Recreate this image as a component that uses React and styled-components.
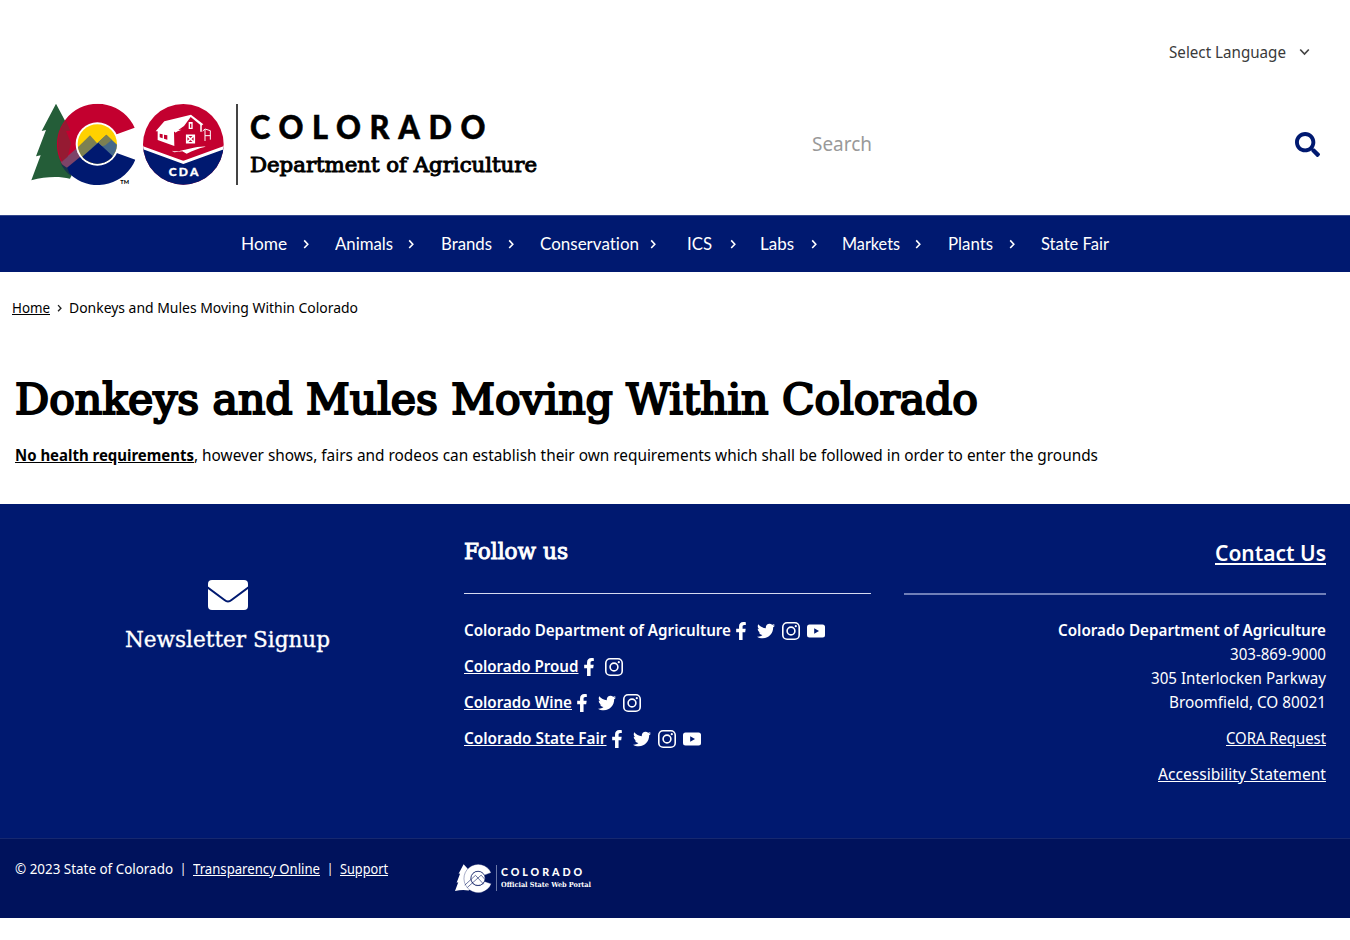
import React, { useLayoutEffect, useRef, useState } from "react";
import styled, { createGlobalStyle } from "styled-components";
import { FaSearch, FaFacebookF, FaTwitter } from "react-icons/fa";

const navy = "#001970";
const sans = '"Noto Sans", "Open Sans", sans-serif';
const slab = '"DejaVu Serif Condensed", "DejaVu Serif", serif';

const GlobalStyle = createGlobalStyle`
  * { box-sizing: border-box; }
  body { margin: 0; background: #fff; color: #000; font-family: ${sans}; font-size: 16px; line-height: 24px; font-variant-ligatures: none; }
  a { color: inherit; }
  svg { display: block; flex: none; }
`;

/* Condenses a single line of text to a fixed measure. */
const FitBox = styled.span`
  display: inline-block;
  flex: none;
  white-space: nowrap;
  text-align: left;
  width: ${(p) => p.$w}px;
  vertical-align: top;
  text-decoration: inherit;
`;
const FitInner = styled.span`
  display: inline-block;
  transform-origin: 0 50%;
  text-decoration: inherit;
`;
function Fit({ w, children }) {
  const ref = useRef(null);
  const [scale, setScale] = useState(1);
  useLayoutEffect(() => {
    setScale(w / ref.current.getBoundingClientRect().width);
  }, [w]);
  return (
    <FitBox $w={w}>
      <FitInner ref={ref} style={{ transform: `scaleX(${scale})` }}>{children}</FitInner>
    </FitBox>
  );
}

const Header = styled.header`
  height: 215px;
  padding-top: 40px;
`;
const LanguageBar = styled.div`
  display: flex;
  justify-content: flex-end;
  align-items: center;
  gap: 13px;
  height: 24px;
  padding-right: 40px;
  color: #3a3a3a;
`;
const Masthead = styled.div`
  display: flex;
  align-items: center;
  height: 84px;
  margin-top: 38px;
  padding: 0 30px;
`;
const Brand = styled.a`
  display: flex;
  align-items: center;
  width: 782px;
  text-decoration: none;
`;
const Divider = styled.span`
  width: 2px;
  height: 81px;
  margin: 0 12px 0 10px;
  background: #444;
`;
const Wordmark = styled.div`
  display: flex;
  flex-direction: column;
  padding-top: 3px;
`;
const StateName = styled.span`
  height: 40px;
  font: 900 32px/40px Lato, sans-serif;
  letter-spacing: 9px;
  -webkit-text-stroke: 0.5px;
`;
const DeptName = styled.span`
  height: 37px;
  font: 400 21px/37px ${slab};
  -webkit-text-stroke: 0.9px;
`;
const SearchForm = styled.div`
  flex: 1;
  display: flex;
  align-items: center;
  justify-content: space-between;
  font-size: 20px;
  color: #999;
`;

const Nav = styled.nav`
  display: flex;
  height: 57px;
  padding-left: 241px;
  align-items: center;
  border-top: 1px solid #33478c;
  background: ${navy};
  color: #fff;
  font-family: Lato, sans-serif;
  font-size: 16.5px;
`;
const NavItem = styled.a`
  display: flex;
  align-items: center;
  gap: ${(p) => p.$gap}px;
  width: ${(p) => p.$cell}px;
  text-decoration: none;
`;

const Breadcrumb = styled.div`
  display: flex;
  align-items: center;
  height: 24px;
  margin: 23px 0 0 12px;
  font-size: 15px;
`;
const Crumb = styled.span`
  text-decoration: ${(p) => (p.$link ? "underline" : "none")};
`;
const CrumbSep = styled.span`
  display: flex;
  width: 19px;
  padding: 1px 0 0 7px;
`;
const Title = styled.h1`
  margin: 57px 0 0 15px;
  height: 48px;
  font: 400 42px/48px ${slab};
  -webkit-text-stroke: 2px;
`;
const Intro = styled.p`
  display: flex;
  margin: 19px 0 0 15px;
  height: 61px;
`;
const Strong = styled.strong`
  font-weight: 700;
  text-decoration: underline;
`;

const Footer = styled.footer`
  display: grid;
  grid-template-columns: 455px 416px 1fr;
  height: 334px;
  background: ${navy};
  color: #fff;
`;
const Newsletter = styled.div`
  display: flex;
  flex-direction: column;
  align-items: center;
  gap: 15px;
  padding-top: 76px;
  font: 400 22px/30px ${slab};
  -webkit-text-stroke: 0.3px;
`;
const Follow = styled.div`
  padding: 33px 0 0 9px;
`;
const Contact = styled.div`
  padding: 33px 24px 0 33px;
  text-align: right;
`;
const FollowTitle = styled.h2`
  margin: 0;
  height: 56px;
  font: 400 22px/30px ${slab};
  -webkit-text-stroke: 0.9px;
`;
const ContactTitle = styled.h2`
  margin: 0;
  height: 56px;
  font: 600 22px/30px ${sans};
  text-decoration: underline;
`;
const Rule = styled.div`
  height: ${(p) => p.$h}px;
  margin-bottom: ${(p) => 25 - p.$h}px;
  background: ${(p) => p.$c};
`;
const Row = styled.div`
  display: flex;
  align-items: center;
  height: 24px;
  margin-bottom: 12px;
`;
const AccountName = styled.span`
  font-weight: 600;
  text-decoration: ${(p) => (p.$link ? "underline" : "none")};
`;
const Socials = styled.span`
  display: flex;
  align-items: center;
  gap: 7px;
  padding: 2px 0 0 1px;
`;
const Line = styled.div`
  height: 24px;
  margin-bottom: ${(p) => p.$after || 0}px;
  font-weight: ${(p) => (p.$bold ? 600 : 400)};
  text-decoration: ${(p) => (p.$link ? "underline" : "none")};
`;
const BottomBar = styled.div`
  display: flex;
  height: 80px;
  padding: 18px 0 0 15px;
  border-top: 1px solid #16286f;
  background: #00125c;
  color: #fff;
  font-size: 14px;
`;
const Legal = styled.div`
  display: flex;
  width: 440px;
`;
const LegalLink = styled.a`
  text-decoration: underline;
`;
const Pipe = styled.span`
  width: 20px;
  text-align: center;
  font-size: 12px;
`;
const Portal = styled.div`
  display: flex;
  align-items: center;
  height: 30px;
  margin-top: 6px;
`;
const PortalText = styled.div`
  display: flex;
  flex-direction: column;
  margin-left: 4px;
  border-left: 1px solid #6b78a8;
  padding-left: 4px;
`;
const PortalName = styled.span`
  font: 900 11px/14px Lato, sans-serif;
  letter-spacing: 3px;
  height: 14px;
`;
const PortalTag = styled.span`
  font: 700 7px/12px ${slab};
  height: 12px;
`;

const Chevron = ({ color = "#fff", w = 6, h = 10, sw = 1.6 }) => (
  <svg width={w} height={h} viewBox="0 0 6 10" fill="none" stroke={color} strokeWidth={sw}>
    <path d="M1.2 1.4l3.6 3.8-3.6 3.8" />
  </svg>
);

const StateMark = () => (
  <svg width="196" height="84" viewBox="30 36 588 252">
    <defs>
      <clipPath id="ring">
        <path d="M344 113A122 122 0 1 0 346 209L288 188A62 62 0 1 1 286 134Z" />
      </clipPath>
      <clipPath id="disc"><circle cx="232" cy="162" r="59" /></clipPath>
      <clipPath id="badge"><circle cx="490" cy="163" r="121" /></clipPath>
    </defs>
    <path fill="#245d38" d="M108 41L65 123L78 120L48 199L62 196L34 271C75 260 115 258 150 266L190 180L138 123L151 122Z" />
    <g clipPath="url(#ring)">
      <path fill="#c3002f" d="M90 30H360V165H240L140 235L90 300Z" />
      <path fill="#7d4468" d="M120 218L215 136L240 170L150 250Z" />
      <path fill="#001970" d="M140 234L232 158L360 150V300H180L120 262Z" />
    </g>
    <path fill="#8a2033" opacity=".8" d="M137 90L151 122L138 123L153 160L143 200L126 215A122 122 0 0 1 137 90Z" />
    <path fill="#17354b" d="M124 222L142 234L150 255L156 260Q132 246 118 210Z" />
    <circle cx="232" cy="162" r="65" fill="#fff" />
    <g clipPath="url(#disc)">
      <path fill="#ffd100" d="M165 95H300V230H165Z" />
      <path fill="#7c8052" d="M155 190L210 136L245 175L200 220Z" />
      <path fill="#45698a" d="M215 175L259 134L305 178V230H215Z" />
      <path fill="#001970" d="M155 228L235 158L310 228V240H155Z" />
      <path fill="#7c8052" d="M240 153L259 134L275 150L256 166L247 169L235 158Z" />
    </g>
    <text x="301" y="281" textLength="26" lengthAdjust="spacingAndGlyphs" fontFamily="Lato" fontWeight="900" fontSize="18">TM</text>

    <g clipPath="url(#badge)">
      <path fill="#c3002f" d="M360 35H620V290H360Z" />
      <path fill="#001970" d="M360 169L490 221L620 169V290H360Z" />
      <path fill="none" stroke="#fff" strokeWidth="9" d="M360 170L490 217L620 170" />
    </g>
    <path fill="#fff" d="M407 124L433 94L513 74L550 103L544 107L512 81L492 108L474 121L462 126L463 168L413 150V124Z" />
    <path fill="#c3002f" d="M419 131L428 133V145L419 142ZM432 134L442 136V149L432 146Z" />
    <path fill="#fff" d="M506 96H518V117H506ZM463 121L485 119L473 124L466 128Z" />
    <path fill="#c3002f" d="M510 101H514V113H510Z" />
    <path fill="none" stroke="#fff" strokeWidth="4.5" d="M500 136H523V158H500ZM500 136L523 158M523 136L500 158M543 105V125" />
    <path fill="none" stroke="#fff" strokeWidth="3" d="M548 123L555 117L571 122V149M555 119V153M555 137H571" />
    <path fill="#fff" d="M455 182C475 187 482 181 508 176C530 171 545 169 557 170C535 175 519 181 500 191L487 184L463 187Z" />
    <text x="446" y="258" textLength="89" lengthAdjust="spacing" fontFamily="Lato" fontWeight="900" fontSize="36" fill="#fff" stroke="#fff">CDA</text>
  </svg>
);

const SmallMark = () => (
  <svg width="37" height="29" viewBox="34 39 318 248">
    <path fill="#fff" d="M108 41L65 123L78 120L48 199L62 196L34 271C75 260 115 258 150 266L180 250V120Z" />
    <path fill="#fff" stroke="#00125c" strokeWidth="3" d="M344 113A122 122 0 1 0 346 209L288 188A62 62 0 1 1 286 134Z" />
    <circle cx="232" cy="162" r="61" fill="#fff" stroke="#00125c" strokeWidth="6" />
    <path fill="none" stroke="#00125c" strokeWidth="5" d="M118 220L210 136L280 212M140 240L259 134L290 170" />
  </svg>
);

const Envelope = () => (
  <svg width="40" height="30" viewBox="0 0 40 30">
    <rect width="40" height="30" rx="4" fill="#fff" />
    <path d="M-1 7L16.5 20Q20 23 23.5 20L41 7" fill="none" stroke={navy} strokeWidth="2" />
  </svg>
);

const InstagramIcon = () => (
  <svg width="18" height="18" viewBox="0 0 18 18" fill="none" stroke="#fff">
    <rect x=".8" y=".8" width="16.4" height="16.4" rx="4.3" strokeWidth="1.6" />
    <circle cx="9" cy="9" r="3.9" strokeWidth="1.6" />
    <circle cx="13.8" cy="4.2" r="1.1" fill="#fff" stroke="none" />
  </svg>
);
const YoutubeIcon = () => (
  <svg width="18" height="18" viewBox="0 0 18 18">
    <rect y="2.5" width="18" height="13" rx="2.5" fill="#fff" />
    <path d="M7.2 6.2V11.8L12 9Z" fill={navy} />
  </svg>
);
const socialIcons = {
  f: <FaFacebookF size={18} color="#fff" />,
  t: <FaTwitter size={18} color="#fff" />,
  i: <InstagramIcon />,
  y: <YoutubeIcon />,
};

const navItems = [
  ["Home", 46, 16, 94],
  ["Animals", 58, 15, 106],
  ["Brands", 51, 16, 99],
  ["Conservation", 99, 11, 147],
  ["ICS", 25, 18, 73],
  ["Labs", 34, 17, 82],
  ["Markets", 58, 15, 106],
  ["Plants", 45, 16, 93],
  ["State Fair", 68, 0, 68],
];
const accounts = [
  ["Colorado Department of Agriculture", 267, "ftiy", false],
  ["Colorado Proud", 114.5, "fi", true],
  ["Colorado Wine", 108, "fti", true],
  ["Colorado State Fair", 142.5, "ftiy", true],
];

export default function App() {
  return (
    <>
      <GlobalStyle />
      <Header>
        <LanguageBar>
          <Fit w={117}>Select Language</Fit>
          <svg width="11" height="8" viewBox="0 0 11 8" fill="none" stroke="#444" strokeWidth="1.7">
            <path d="M1.2 1.5L5.5 6l4.3-4.5" />
          </svg>
        </LanguageBar>
        <Masthead>
          <Brand>
            <StateMark />
            <Divider />
            <Wordmark>
              <StateName><Fit w={244}>COLORADO</Fit></StateName>
              <DeptName><Fit w={287}>Department of Agriculture</Fit></DeptName>
            </Wordmark>
          </Brand>
          <SearchForm>
            <Fit w={60}>Search</Fit>
            <FaSearch size={25} color={navy} />
          </SearchForm>
        </Masthead>
      </Header>
      <Nav>
        {navItems.map(([label, w, gap, cell]) => (
          <NavItem key={label} $gap={gap} $cell={cell}>
            <Fit w={w}>{label}</Fit>
            {gap > 0 && <Chevron />}
          </NavItem>
        ))}
      </Nav>
      <Breadcrumb>
        <Crumb $link><Fit w={38}>Home</Fit></Crumb>
        <CrumbSep><Chevron color="#222" w={5} h={8} sw={1.7} /></CrumbSep>
        <Crumb><Fit w={289}>Donkeys and Mules Moving Within Colorado</Fit></Crumb>
      </Breadcrumb>
      <Title><Fit w={963}>Donkeys and Mules Moving Within Colorado</Fit></Title>
      <Intro>
        <Strong><Fit w={179}>No health requirements</Fit></Strong>
        <Fit w={904}>, however shows, fairs and rodeos can establish their own requirements which shall be followed in order to enter the grounds</Fit>
      </Intro>
      <Footer>
        <Newsletter>
          <Envelope />
          <Fit w={205}>Newsletter Signup</Fit>
        </Newsletter>
        <Follow>
          <FollowTitle><Fit w={104}>Follow us</Fit></FollowTitle>
          <Rule $h={1} $c="#d5daf0" />
          {accounts.map(([name, w, icons, link]) => (
            <Row key={name}>
              <AccountName $link={link}><Fit w={w}>{name}</Fit></AccountName>
              <Socials>
                {icons.split("").map((k) => <React.Fragment key={k}>{socialIcons[k]}</React.Fragment>)}
              </Socials>
            </Row>
          ))}
        </Follow>
        <Contact>
          <ContactTitle><Fit w={111}>Contact Us</Fit></ContactTitle>
          <Rule $h={2} $c="#6f7fb8" />
          <Line $bold><Fit w={268}>Colorado Department of Agriculture</Fit></Line>
          <Line><Fit w={96}>303-869-9000</Fit></Line>
          <Line><Fit w={175}>305 Interlocken Parkway</Fit></Line>
          <Line $after={12}><Fit w={157}>Broomfield, CO 80021</Fit></Line>
          <Line $link $after={12}><Fit w={100}>CORA Request</Fit></Line>
          <Line $link><Fit w={168}>Accessibility Statement</Fit></Line>
        </Contact>
      </Footer>
      <BottomBar>
        <Legal>
          <Fit w={158}>© 2023 State of Colorado</Fit>
          <Pipe>|</Pipe>
          <LegalLink><Fit w={127}>Transparency Online</Fit></LegalLink>
          <Pipe>|</Pipe>
          <LegalLink><Fit w={48}>Support</Fit></LegalLink>
        </Legal>
        <Portal>
          <SmallMark />
          <PortalText>
            <PortalName><Fit w={84}>COLORADO</Fit></PortalName>
            <PortalTag><Fit w={90}>Official State Web Portal</Fit></PortalTag>
          </PortalText>
        </Portal>
      </BottomBar>
    </>
  );
}
